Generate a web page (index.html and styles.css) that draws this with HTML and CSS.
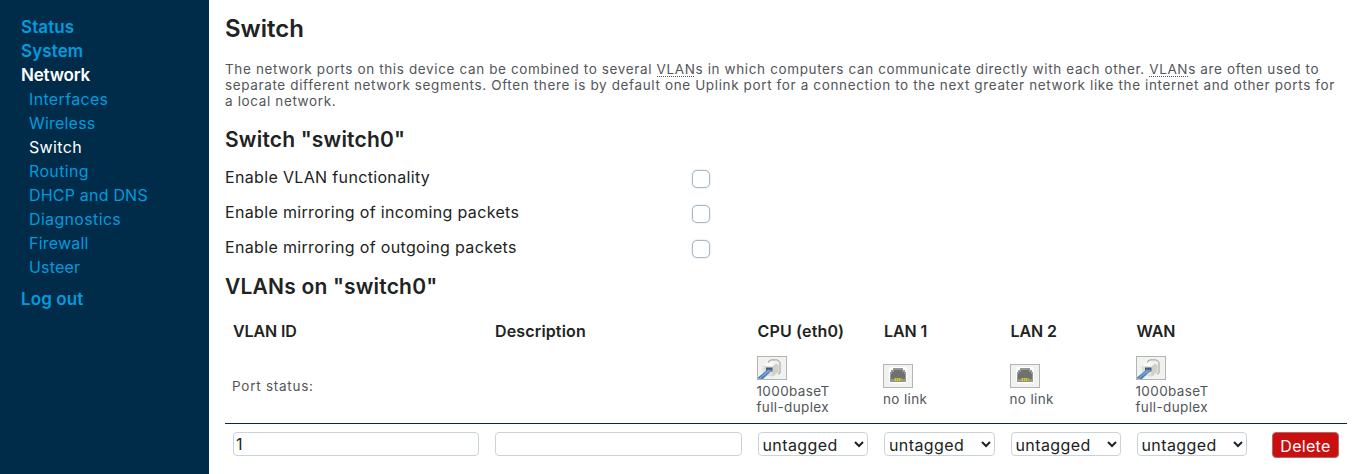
FILE: index.html
```html
<!DOCTYPE html>
<html lang="en">
<head>
<meta charset="utf-8">
<title>Switch</title>
<link rel="stylesheet" href="styles.css">
</head>
<body>
<svg class="defs" width="0" height="0" aria-hidden="true">
  <defs>
    <linearGradient id="cable" x1="0" y1="1" x2="1" y2="0"><stop offset="0" stop-color="#3f6fae"/><stop offset="1" stop-color="#6d9ad3"/></linearGradient>
  </defs>
  <symbol id="port-up" viewBox="0 0 30 24">
    <rect x=".5" y=".5" width="29" height="23" fill="#f0f2f0" stroke="#b3b5b3"/>
    <path d="M11 8l1-3.200 2-.9h6l2 1.200 1 1v11l-2 1" fill="#f0f0ed" stroke="#9b9d99"/>
    <path d="M5.500 9.500l4.500-2.500 8 .5v12l-3 1-9-1z" fill="#dfded8"/>
    <path d="M5.500 9.500l4.500-3 9 1-3.500 3z" fill="#fbfbfa"/>
    <path d="M15.500 10.500l3.500-3 2.500 1.500v7l-6 4.500z" fill="#d0cfc8"/>
    <rect x="9" y="11.500" width="6.500" height="4" fill="#465872"/>
    <path d="M1 22.500v-1l9.500-8 5 .5-9.500 9z" fill="url(#cable)"/>
    <path d="M2.500 22.500l9.500-8" stroke="#8fb2de" fill="none"/>
  </symbol>
  <symbol id="port-down" viewBox="0 0 30 24">
    <rect x=".5" y=".5" width="29" height="23" fill="#f0f2f0" stroke="#b3b5b3"/>
    <rect x="6" y="3" width="18" height="16.500" rx="2.500" fill="#fff"/>
    <path d="M10 4h10v2h2v2h1v10h-16v-10h1v-2h2z" fill="#959795"/>
    <path d="M11 6h8v2h2v2h1v5h-14v-5h1v-2h2z" fill="#70706f"/>
    <path d="M11 14h8v3h-8z" fill="#b4a52d"/>
    <path d="M12.500 14v3M14.500 14v3M16.500 14v3" stroke="#d9ca4c" stroke-width=".8"/>
  </symbol>
</svg>
<div class="layout">
  <nav class="sidebar">
    <ul class="menu">
      <li class="top">Status</li>
      <li class="top">System</li>
      <li class="top current network">Network</li>
      <li>
        <ul class="submenu">
          <li>Interfaces</li>
          <li class="tight">Wireless</li>
          <li class="current">Switch</li>
          <li>Routing</li>
          <li class="tight">DHCP and DNS</li>
          <li>Diagnostics</li>
          <li class="tight">Firewall</li>
          <li class="tight">Usteer</li>
        </ul>
      </li>
      <li class="top logout">Log out</li>
    </ul>
  </nav>
  <main class="content">
    <h2 class="title">Switch</h2>
    <p class="intro">The network ports on this device can be combined to several <abbr>VLAN</abbr>s in which computers can communicate directly with each other. <abbr>VLAN</abbr>s are often used to<br>separate different network segments. Often there is by default one Uplink port for a connection to the next greater network like the internet and other ports for<br>a local network.</p>
    <h3 class="title section">Switch "switch0"</h3>
    <div class="options">
      <label class="option"><span>Enable VLAN functionality</span><input type="checkbox" class="check"></label>
      <label class="option"><span>Enable mirroring of incoming packets</span><input type="checkbox" class="check"></label>
      <label class="option"><span>Enable mirroring of outgoing packets</span><input type="checkbox" class="check"></label>
    </div>
    <h3 class="title section vlans">VLANs on "switch0"</h3>
    <div class="table">
      <div class="row head">
        <div class="caps">VLAN ID</div><div>Description</div><div>CPU (eth0)</div><div class="caps">LAN 1</div><div class="caps">LAN 2</div><div class="caps">WAN</div><div></div>
      </div>
      <div class="row status">
        <div class="label">Port status:</div><div></div>
        <div><svg class="port"><use href="#port-up"/></svg><span>1000baseT</span><span>full-duplex</span></div>
        <div><svg class="port"><use href="#port-down"/></svg><span>no link</span></div>
        <div><svg class="port"><use href="#port-down"/></svg><span>no link</span></div>
        <div><svg class="port"><use href="#port-up"/></svg><span>1000baseT</span><span>full-duplex</span></div>
        <div></div>
      </div>
      <div class="row edit">
        <div><input class="field" type="text" value="1"></div>
        <div><input class="field" type="text"></div>
        <div><select class="field"><option>untagged</option></select></div>
        <div><select class="field"><option>untagged</option></select></div>
        <div><select class="field"><option>untagged</option></select></div>
        <div><select class="field"><option>untagged</option></select></div>
        <div class="actions"><button class="delete">Delete</button></div>
      </div>
    </div>
  </main>
</div>
</body>
</html>
```
FILE: styles.css
```css
* { box-sizing: border-box; }
body {
  margin: 0;
  background: #fff;
  color: #212322;
  font: 16px/24px Inter, sans-serif;
  letter-spacing: .34px;
  overflow: hidden;
}
.defs { display: block; }
.layout { display: flex; height: 474px; }
.sidebar { width: 209px; flex: none; background: #002b49; color: #009cde; padding: 15px 21px; }
.menu, .submenu { list-style: none; margin: 0; padding: 0; }
.top { font-size: 17px; font-weight: 600; letter-spacing: .1px; }
.network { letter-spacing: -.2px; }
.submenu { padding: 0 0 8px 8px; }
.tight { letter-spacing: .2px; }
.current { color: #fff; }
.content { flex: 1; padding: 14px 5px 0 16px; white-space: nowrap; }
.title { margin: 0; font-size: 24px; line-height: 30px; font-weight: 600; letter-spacing: 0; }
.intro { margin: 17px 0 16px; font-size: 13.5px; line-height: 16px; letter-spacing: .63px; color: #53565a; }
.intro abbr { background: linear-gradient(90deg, #53565a 50%, transparent 50%) left bottom / 2px 1px repeat-x; }
.section { font-size: 21px; letter-spacing: .2px; }
.options { padding-top: 5px; }
.option { display: flex; height: 35px; align-items: center; }
.option span { width: 467px; padding-bottom: 2px; }
.check { appearance: none; width: 18px; height: 18px; margin: 2px 0 0; border: 1px solid #a9b8c5; border-radius: 5px; background: #fff; box-shadow: 0 0 2px #c5d0d8; }
.vlans { margin-top: 7px; }
.table { margin-top: 12px; }
.row { display: grid; grid-template-columns: 262px 262.500px 126.500px 126.500px 126px 126.500px 1fr; }
.row > div { padding: 0 8px; }
.head { height: 35px; line-height: 35px; font-weight: 600; letter-spacing: .15px; }
.head .caps { letter-spacing: -.1px; }
.status { height: 75px; padding-bottom: 1px; align-items: center; border-bottom: 1px solid #002b49; font-size: 13.5px; line-height: 16px; letter-spacing: .37px; color: #53565a; }
.status > div { padding-left: 7px; }
.status .label { letter-spacing: .75px; }
.port { display: block; width: 30px; height: 24px; margin-bottom: 3px; }
.status span { display: block; }
.edit { padding-top: 8px; }
.field { display: block; width: 100%; height: 24px; margin: 0; padding: 0 2px; border: 1px solid #c9d3da; border-radius: 4px; background: #fff; color: #212322; font: inherit; letter-spacing: inherit; }
select.field { padding: 1px 0 0; letter-spacing: .4px; }
.row .actions { display: flex; justify-content: flex-end; }
.delete { width: 67px; height: 26px; padding: 1px 0 0; border: 1px solid #b5686e; border-radius: 4px; background: #c9100f; color: #fff; font: inherit; letter-spacing: .3px; }
```
